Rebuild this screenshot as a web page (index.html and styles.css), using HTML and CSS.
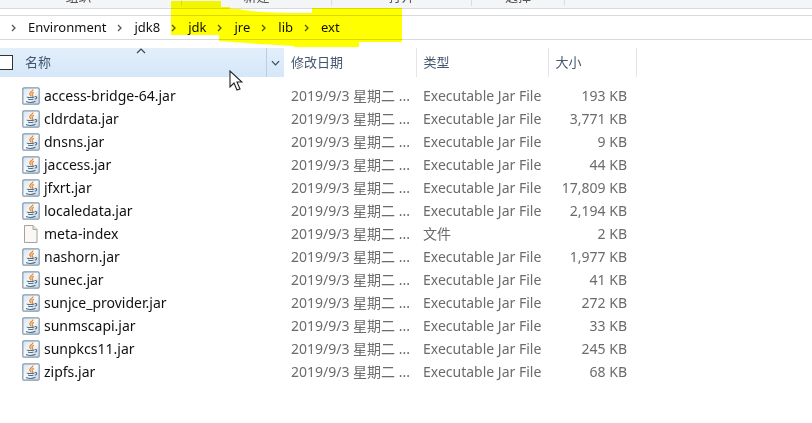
FILE: index.html
```
<!DOCTYPE html>
<html lang="zh-CN">
<head>
<meta charset="utf-8">
<title>ext</title>
<link rel="stylesheet" href="styles.css">
</head>
<body>
<svg class="defs" aria-hidden="true">
  <defs>
    <linearGradient id="tile" x1="0" y1="0" x2="1" y2="1">
      <stop offset="0" stop-color="#d8e2ed"/><stop offset=".5" stop-color="#f8f9fa"/><stop offset="1" stop-color="#c6d4e1"/>
    </linearGradient>
    <symbol id="jar" viewBox="0 0 18 18">
      <rect x=".8" y=".8" width="16.4" height="16.4" rx="1.2" fill="url(#tile)" stroke="#8199b0" stroke-width="1.2"/>
      <path d="M10.8 2.5c.6 2-4.6 3.200-2.600 5.400l.8 1.300M12 5.300c-2 .7-2.600 1.500-1.600 2.500.5.6.1 1.200-.5 1.600" fill="none" stroke="#e58a32" stroke-width="1.300"/>
      <path d="M5.300 9.900c-1 .7 4.500.9 7 .1M6 12c1.500.6 4 .6 5.500 0M4 14.500c2.500 1 7 1 9.500-.2M12.700 9.700c2.800-.8 2.700 1.800 0 2.600" fill="none" stroke="#4d6f8e" stroke-width="1.100"/>
    </symbol>
    <symbol id="page" viewBox="0 0 18 18">
      <path d="M2.500.5h8.500l4 4v13h-12.500z" fill="#faf8f5" stroke="#a5a29f"/>
      <path d="M11 .5v4h4" fill="#e8e6e3" stroke="#a5a29f"/>
    </symbol>
    <symbol id="chevron" viewBox="0 0 6 8">
      <path d="M1 1l3 3-3 3" fill="none" stroke="#555" stroke-width="1.300"/>
    </symbol>
  </defs>
</svg>

<div class="ribbon">
  <span class="group first">组织</span>
  <span class="group">新建</span>
  <span class="group">打开</span>
  <span class="group">选择</span>
</div>

<nav class="address" aria-label="路径">
  <svg class="sep"><use href="#chevron"/></svg>
  <a href="#">Environment</a>
  <svg class="sep"><use href="#chevron"/></svg>
  <a href="#">jdk8</a>
  <svg class="sep"><use href="#chevron"/></svg>
  <a href="#">jdk</a>
  <svg class="sep"><use href="#chevron"/></svg>
  <a href="#">jre</a>
  <svg class="sep"><use href="#chevron"/></svg>
  <a href="#">lib</a>
  <svg class="sep"><use href="#chevron"/></svg>
  <a href="#">ext</a>
</nav>

<table class="files">
  <colgroup><col class="c-name"><col class="c-date"><col class="c-type"><col class="c-size"><col></colgroup>
  <thead>
    <tr>
      <th class="name">
        <div class="name-head">
          <input type="checkbox" class="all" aria-label="全选">
          <span>名称</span>
          <button class="filter" aria-label="筛选"><svg viewBox="0 0 10 6"><path d="M1 1l4 4 4-4" fill="none" stroke="#34495e" stroke-width="1.300"/></svg></button>
        </div>
        <svg class="sort" viewBox="0 0 10 6"><path d="M1 5l4-4 4 4" fill="none" stroke="#444" stroke-width="1.200"/></svg>
      </th>
      <th>修改日期</th><th>类型</th><th>大小</th><td></td>
    </tr>
  </thead>
  <tbody>
    <tr><td class="file"><svg><use href="#jar"/></svg>access-bridge-64.jar</td><td>2019/9/3 星期二 ...</td><td>Executable Jar File</td><td class="size">193 KB</td></tr>
    <tr><td class="file"><svg><use href="#jar"/></svg>cldrdata.jar</td><td>2019/9/3 星期二 ...</td><td>Executable Jar File</td><td class="size">3,771 KB</td></tr>
    <tr><td class="file"><svg><use href="#jar"/></svg>dnsns.jar</td><td>2019/9/3 星期二 ...</td><td>Executable Jar File</td><td class="size">9 KB</td></tr>
    <tr><td class="file"><svg><use href="#jar"/></svg>jaccess.jar</td><td>2019/9/3 星期二 ...</td><td>Executable Jar File</td><td class="size">44 KB</td></tr>
    <tr><td class="file"><svg><use href="#jar"/></svg>jfxrt.jar</td><td>2019/9/3 星期二 ...</td><td>Executable Jar File</td><td class="size">17,809 KB</td></tr>
    <tr><td class="file"><svg><use href="#jar"/></svg>localedata.jar</td><td>2019/9/3 星期二 ...</td><td>Executable Jar File</td><td class="size">2,194 KB</td></tr>
    <tr><td class="file"><svg><use href="#page"/></svg>meta-index</td><td>2019/9/3 星期二 ...</td><td>文件</td><td class="size">2 KB</td></tr>
    <tr><td class="file"><svg><use href="#jar"/></svg>nashorn.jar</td><td>2019/9/3 星期二 ...</td><td>Executable Jar File</td><td class="size">1,977 KB</td></tr>
    <tr><td class="file"><svg><use href="#jar"/></svg>sunec.jar</td><td>2019/9/3 星期二 ...</td><td>Executable Jar File</td><td class="size">41 KB</td></tr>
    <tr><td class="file"><svg><use href="#jar"/></svg>sunjce_provider.jar</td><td>2019/9/3 星期二 ...</td><td>Executable Jar File</td><td class="size">272 KB</td></tr>
    <tr><td class="file"><svg><use href="#jar"/></svg>sunmscapi.jar</td><td>2019/9/3 星期二 ...</td><td>Executable Jar File</td><td class="size">33 KB</td></tr>
    <tr><td class="file"><svg><use href="#jar"/></svg>sunpkcs11.jar</td><td>2019/9/3 星期二 ...</td><td>Executable Jar File</td><td class="size">245 KB</td></tr>
    <tr><td class="file"><svg><use href="#jar"/></svg>zipfs.jar</td><td>2019/9/3 星期二 ...</td><td>Executable Jar File</td><td class="size">68 KB</td></tr>
  </tbody>
</table>

<svg class="marker" viewBox="171 0 232 48" aria-hidden="true">
  <path d="M171 1H221V7H230V9H240L243 10 260 12 290 13H312V8H402V42H359V47H294V46L260 44 233 42 219 41V35H171z" fill="#ff0"/>
</svg>
<svg class="cursor" viewBox="0 0 14 22" aria-hidden="true">
  <path d="M1 1v16l4-4 3 7 3-1-3-7h5z" fill="#fff" stroke="#222" stroke-width="1.100"/>
</svg>
</body>
</html>
```
FILE: styles.css
```
* { box-sizing: border-box; }
body {
  margin: 0;
  background: #fff;
  color: #111;
  font: 13px/23px "Noto Sans", "Noto Sans CJK SC", sans-serif;
  position: relative;
}
.defs { position: absolute; width: 0; height: 0; }
.ribbon {
  display: grid;
  grid-template-columns: 182px 150px 140px 93px 1fr;
  height: 9px;
  overflow: hidden;
  background: #f4f5f7;
  border-bottom: 1px solid #d9dadc;
}
.group {
  display: flex;
  align-items: flex-end;
  justify-content: center;
  height: 6px;
  border-right: 1px solid #dcdde0;
  color: #555;
  line-height: 20px;
}
.first { padding-right: 24px; }
.address {
  display: flex;
  align-items: center;
  height: 25px;
  margin: 6px 0 8px;
  padding-left: 11px;
  border: solid #d9d9d9;
  border-width: 1px 0;
}
.address a { color: #111; text-decoration: none; }
.sep { width: 6px; height: 8px; margin-right: 11px; }
.address a + .sep { margin-left: 11px; }

.files { width: 100%; table-layout: fixed; border-collapse: collapse; }
.c-name { width: 284px; }
.c-date { width: 132px; }
.c-type { width: 132px; }
.c-size { width: 88px; }
th, td { padding: 0 0 0 7px; text-align: left; font-weight: 400; white-space: nowrap; }
th { height: 29px; color: #43566f; border-right: 1px solid #e3e5e8; }
th.name {
  padding: 0;
  position: relative;
  background: linear-gradient(#e3effb, #d5e7f8);
  border-right: 0;
}
.name-head { display: flex; align-items: center; height: 29px; }
.all {
  appearance: none;
  width: 15px;
  height: 15px;
  margin: 0 12px 0 -2px;
  border: 1px solid #333;
  background: #fff;
}
.filter {
  display: flex;
  align-items: center;
  justify-content: center;
  width: 18px;
  height: 29px;
  margin-left: auto;
  padding: 0;
  border: 0;
  border-left: 1px solid #b9cee2;
  background: none;
}
.filter svg { width: 9px; height: 6px; }
.sort { position: absolute; top: 0; left: 136px; width: 10px; height: 6px; }
tbody::before { content: ""; display: block; height: 7px; }
tbody td { height: 23px; font-size: 14px; color: #6b6b6b; }
tbody .file { padding-left: 22px; color: #111; }
.file svg { width: 18px; height: 18px; margin-right: 4px; vertical-align: -4px; }
tbody .size { padding: 0 9px 0 0; text-align: right; }
.marker {
  position: absolute;
  top: 0;
  left: 171px;
  width: 232px;
  height: 48px;
  mix-blend-mode: multiply;
  pointer-events: none;
}
.cursor { position: absolute; top: 70px; left: 229px; width: 14px; height: 22px; pointer-events: none; }
```
